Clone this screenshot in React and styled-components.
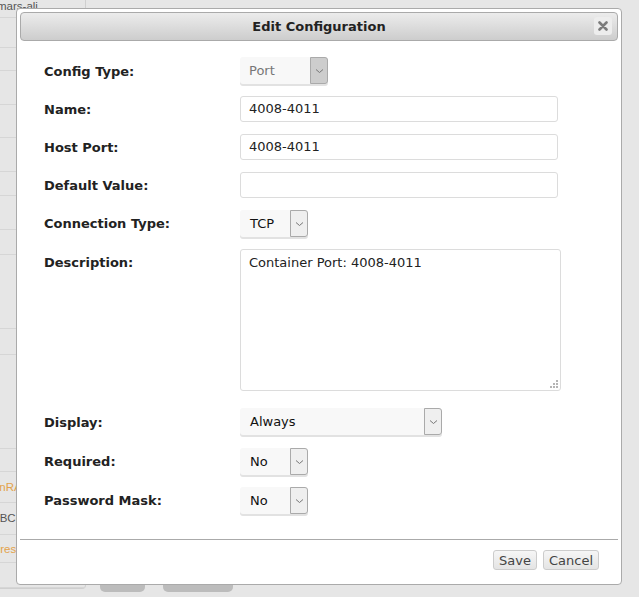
import React from 'react';
import styled, { createGlobalStyle } from 'styled-components';

const GlobalStyle = createGlobalStyle`
  html, body {
    margin: 0;
    padding: 0;
    background: #e6e6e6;
  }
  body {
    font-family: "DejaVu Sans", Verdana, sans-serif;
    font-size: 13px;
    color: #222;
  }
`;

const Page = styled.div`
  position: relative;
  width: 639px;
  height: 597px;
  overflow: hidden;
  background: #e6e6e6;
`;

const BackTable = styled.div`
  display: flex;
  flex-direction: column;
  width: 85px;
  height: 588px;
  border-right: 1px solid #cfcfcf;
  border-bottom: 1px solid #cfcfcf;
  border-bottom-right-radius: 4px;
`;

const BackRow = styled.div`
  display: flex;
  align-items: ${props => (props.top ? 'flex-start' : 'center')};
  height: ${props => props.h}px;
  border-bottom: 1px solid #d6d6d6;
  overflow: hidden;
  white-space: nowrap;
  font-family: "Liberation Sans", Arial, sans-serif;
  font-size: 11.5px;
  line-height: 12px;
  color: ${props => (props.link ? '#e3a24a' : '#555')};
`;

const BackText = styled.span`
  margin-left: ${props => props.shift}px;
`;

const BackButtons = styled.div`
  position: absolute;
  left: 100px;
  top: 578px;
  display: flex;
  gap: 18px;
`;

const BackPill = styled.div`
  width: ${props => props.w}px;
  height: 14px;
  border-radius: 5px;
  background: #bcbcbc;
`;

const Dialog = styled.div`
  position: absolute;
  left: 16px;
  top: 8px;
  width: 598px;
  height: 569px;
  padding: 3px;
  background: #fff;
  border: 1px solid #aaa;
  border-radius: 4px;
  display: flex;
  flex-direction: column;
`;

const TitleBar = styled.div`
  position: relative;
  height: 27px;
  border: 1px solid #aaa;
  border-radius: 4px;
  background: linear-gradient(#ececec, #cdcdcd);
  display: flex;
  align-items: center;
  justify-content: center;
  font-weight: bold;
  font-size: 13px;
  color: #222;
`;

const CloseButton = styled.div`
  position: absolute;
  right: 5px;
  top: 4px;
  width: 18px;
  height: 18px;
  border-radius: 3px;
  background: #ededed;
  display: flex;
  align-items: center;
  justify-content: center;
`;

const Form = styled.div`
  flex: 1;
  display: flex;
  flex-direction: column;
  gap: 12px;
  padding: 16px 24px 0 24px;
`;

const Row = styled.div`
  display: flex;
  align-items: flex-start;
  margin-bottom: ${props => props.extra || 0}px;
`;

const Label = styled.div`
  box-sizing: border-box;
  width: 196px;
  height: ${props => props.lh || 27}px;
  flex: none;
  padding-top: ${props => (props.nudge ? 1 : 0)}px;
  line-height: ${props => props.lh || 27}px;
  font-weight: bold;
  font-size: 13px;
  color: #222;
  white-space: nowrap;
`;

const TextInput = styled.div`
  box-sizing: border-box;
  width: 318px;
  height: 26px;
  padding: 0 8px;
  border: 1px solid #dcdcdc;
  border-radius: 3px;
  line-height: 24px;
  font-size: 13px;
  color: #222;
`;

const AreaWrap = styled.div`
  position: relative;
  width: 321px;
  height: 142px;
`;

const TextArea = styled.textarea`
  box-sizing: border-box;
  display: block;
  width: 321px;
  height: 142px;
  margin: 0;
  padding: 5px 8px;
  border: 1px solid #dcdcdc;
  border-radius: 3px;
  font-family: "DejaVu Sans", Verdana, sans-serif;
  font-size: 13px;
  line-height: 16px;
  color: #222;
  resize: none;
  outline: none;
`;

const Grip = styled.svg`
  position: absolute;
  right: 3px;
  bottom: 3px;
`;

const Select = styled.div`
  box-sizing: border-box;
  display: flex;
  width: ${props => props.w}px;
  height: 27px;
  border-radius: 3px;
  background: #f8f8f8;
  box-shadow: 0 2px 0 #e2e2e2;
`;

const SelectValue = styled.div`
  flex: 1;
  padding-left: ${props => (props.disabled ? 9 : 10)}px;
  line-height: 28px;
  font-size: 13px;
  color: ${props => (props.disabled ? '#777' : '#111')};
`;

const SelectArrow = styled.div`
  width: 16px;
  flex: none;
  display: flex;
  align-items: center;
  justify-content: center;
  border: 1px solid #aaa;
  border-radius: 0 3px 3px 0;
  background: ${props => (props.disabled ? '#cdcdcd' : '#efefef')};
`;

const Footer = styled.div`
  display: flex;
  justify-content: flex-end;
  gap: 6px;
  padding: 10px 19px 11px 0;
  border-top: 1px solid #aaa;
`;

const Button = styled.div`
  height: 18px;
  padding: 0 5px;
  border: 1px solid #ccc;
  border-radius: 3px;
  background: linear-gradient(#f6f6f6, #e4e4e4);
  line-height: 19px;
  font-size: 13px;
  color: #444;
`;

const Chevron = () => (
  <svg width="9" height="6" viewBox="0 0 9 6">
    <path d="M1 1.5 L4.5 4.5 L8 1.5" fill="none" stroke="#777" strokeWidth="1" />
  </svg>
);

const CloseIcon = () => (
  <svg width="10" height="10" viewBox="0 0 10 10">
    <path d="M1.5 1.5 L8.5 8.5 M8.5 1.5 L1.5 8.5" stroke="#7c7c7c" strokeWidth="2.6" strokeLinecap="round" />
  </svg>
);

const GripDots = () => (
  <Grip width="8" height="8" viewBox="0 0 8 8">
    {[[6, 0], [3, 3], [6, 3], [0, 6], [3, 6], [6, 6]].map(([x, y]) => (
      <rect key={`${x}-${y}`} x={x} y={y} width="2" height="2" fill="#b5b5b5" />
    ))}
  </Grip>
);

const Dropdown = ({ width, value, disabled }) => (
  <Select w={width}>
    <SelectValue disabled={disabled}>{value}</SelectValue>
    <SelectArrow disabled={disabled}>
      <Chevron />
    </SelectArrow>
  </Select>
);

const backRows = [
  { h: 17, text: 'mars-ali', shift: -3, top: true },
  { h: 30 }, { h: 22 }, { h: 34 }, { h: 33 }, { h: 33 }, { h: 24 }, { h: 34 },
  { h: 24 }, { h: 75 }, { h: 25 }, { h: 95 }, { h: 23 },
  { h: 30, text: 'ColumnRAW', shift: -34, link: true },
  { h: 32, text: 'ABCol', shift: -8 },
  { h: 28, text: 'addresses', shift: -19, link: true },
  { h: 24 },
];

const App = () => (
  <Page>
    <GlobalStyle />
    <BackTable>
      {backRows.map((r, i) => (
        <BackRow key={i} h={r.h} link={r.link} top={r.top}>
          {r.text && <BackText shift={r.shift}>{r.text}</BackText>}
        </BackRow>
      ))}
    </BackTable>
    <BackButtons>
      <BackPill w={45} />
      <BackPill w={70} />
    </BackButtons>
    <Dialog>
      <TitleBar>
        Edit Configuration
        <CloseButton>
          <CloseIcon />
        </CloseButton>
      </TitleBar>
      <Form>
        <Row>
          <Label nudge>Config Type:</Label>
          <Dropdown width={88} value="Port" disabled />
        </Row>
        <Row>
          <Label lh={26} nudge>Name:</Label>
          <TextInput>4008-4011</TextInput>
        </Row>
        <Row>
          <Label lh={26} nudge>Host Port:</Label>
          <TextInput>4008-4011</TextInput>
        </Row>
        <Row>
          <Label lh={26} nudge>Default Value:</Label>
          <TextInput />
        </Row>
        <Row>
          <Label>Connection Type:</Label>
          <Dropdown width={68} value="TCP" />
        </Row>
        <Row extra={5}>
          <Label lh={26} nudge>Description:</Label>
          <AreaWrap>
            <TextArea readOnly value="Container Port: 4008-4011" />
            <GripDots />
          </AreaWrap>
        </Row>
        <Row>
          <Label lh={28} nudge>Display:</Label>
          <Dropdown width={202} value="Always" />
        </Row>
        <Row>
          <Label>Required:</Label>
          <Dropdown width={68} value="No" />
        </Row>
        <Row>
          <Label>Password Mask:</Label>
          <Dropdown width={68} value="No" />
        </Row>
      </Form>
      <Footer>
        <Button>Save</Button>
        <Button>Cancel</Button>
      </Footer>
    </Dialog>
  </Page>
);

export default App;
